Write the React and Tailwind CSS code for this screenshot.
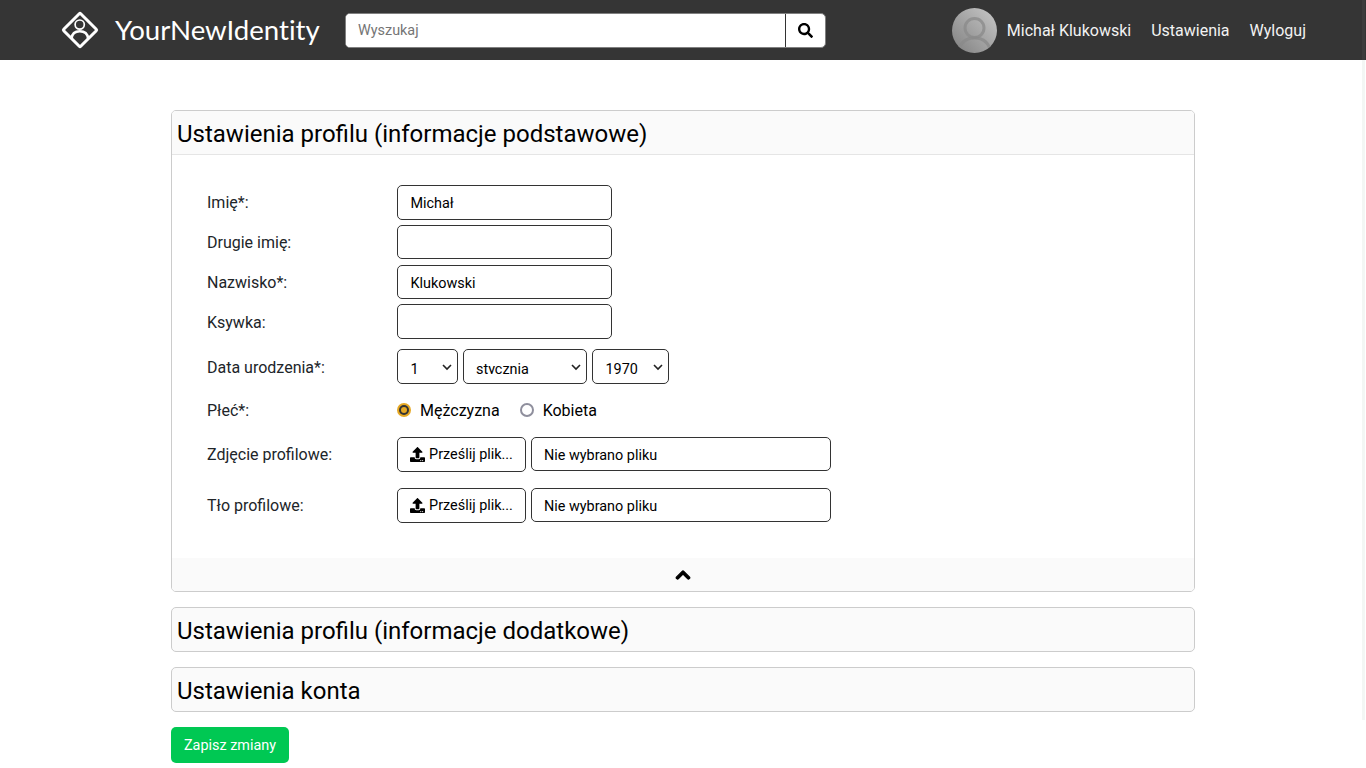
import React from "react";
import { FaSearch, FaUpload, FaChevronUp } from "react-icons/fa";

function Logo() {
  return (
    <svg width="40" height="40" viewBox="0 0 40 40" fill="none" stroke="#fff" className="shrink-0">
      <rect x="8" y="8" width="24" height="24" rx="1" transform="rotate(45 20 20)" strokeWidth="3" />
      <circle cx="19.7" cy="14.6" r="4.6" strokeWidth="1.7" />
      <path d="M11.5 28.5 C12 24 15 21.2 19.8 21.2 C24.6 21.2 27.6 24 28.2 28.5" strokeWidth="2.6" />
    </svg>
  );
}

function Avatar() {
  return (
    <svg width="45" height="45" viewBox="0 0 45 45" className="shrink-0">
      <defs>
        <linearGradient id="av" x1="0" y1="1" x2="1" y2="0">
          <stop offset="0" stopColor="#7f7f7f" />
          <stop offset="1" stopColor="#c9c9c9" />
        </linearGradient>
        <clipPath id="avc"><circle cx="22.5" cy="22.5" r="22.5" /></clipPath>
      </defs>
      <circle cx="22.5" cy="22.5" r="22.5" fill="url(#av)" />
      <g clipPath="url(#avc)" fill="none" stroke="#8a8a8a" strokeOpacity="0.75">
        <circle cx="22.5" cy="20" r="9.5" strokeWidth="3" />
        <path d="M6 45 C8 34 14 30 22.5 30 C31 30 37 34 39 45" strokeWidth="3" />
      </g>
    </svg>
  );
}

function Label({ children, className = "pt-[2px]" }) {
  return <div className={`w-[190px] shrink-0 text-base text-[#212529] ${className}`}>{children}</div>;
}

const inputCls = "w-[215px] h-[34.6px] rounded-[5px] border border-[#333] bg-white px-[12.5px] pt-[2.5px] text-[14.4px] text-black";
const selectCls = "h-[35px] w-full appearance-none rounded-[5px] border border-[#333] bg-white text-[14.4px] text-black";

function TextRow({ label, value }) {
  return (
    <div className="flex items-center">
      <Label>{label}</Label>
      <input className={inputCls} defaultValue={value} />
    </div>
  );
}

function FileRow({ label }) {
  return (
    <div className="flex items-center">
      <Label>{label}</Label>
      <button className="flex h-[35px] w-[129px] items-center justify-center gap-[4px] rounded-[5px] border border-[#333] bg-white text-[14.4px] text-black">
        <FaUpload className="text-[15px]" />
        <span>Prześlij plik...</span>
      </button>
      <div className="ml-[5px] flex h-[34px] w-[300px] items-center rounded-[5px] border border-[#333] bg-white px-[12px] pt-[2px] text-[14.4px] text-black">
        Nie wybrano pliku
      </div>
    </div>
  );
}

function CollapsedCard({ title }) {
  return (
    <div className="mt-[15px] flex h-[45px] items-center rounded-[5px] border border-[#ccc] bg-[#fafafa] px-[5px] pt-[4px] text-2xl text-black">
      {title}
    </div>
  );
}

function SelectBox({ width, value, padding }) {
  return (
    <div className={`relative ${width}`}>
      <select className={`${selectCls} ${padding}`} defaultValue={value}><option>{value}</option></select>
      <svg width="10" height="7" viewBox="0 0 10 7" fill="none" stroke="#222" strokeWidth="1.6" className="pointer-events-none absolute right-[6px] top-[15px]">
        <path d="M1 1l4 4 4-4" />
      </svg>
    </div>
  );
}

export default function App() {
  return (
    <div className="relative min-h-[768px] overflow-hidden bg-white font-['Roboto',sans-serif]">
      <header className="flex h-[60px] items-center bg-[#353535] pl-[60px] pr-[60px] text-white">
        <Logo />
        <div className="ml-[15px] w-[230px] font-['Lato',sans-serif] text-[27.6px] leading-none [font-variant-ligatures:none]">YourNewIdentity</div>
        <div className="flex h-[35px] w-[481px] overflow-hidden rounded-[5px] border border-[#808080] bg-white">
          <input placeholder="Wyszukaj" className="min-w-0 flex-1 bg-white px-[12px] pt-[2px] text-[14.4px] text-black placeholder:text-[#757575]" />
          <div className="flex w-[40px] items-center justify-center border-l border-[#333] text-black">
            <FaSearch className="text-[15px]" />
          </div>
        </div>
        <div className="ml-auto flex items-center text-base text-[#f2f2f2]">
          <Avatar />
          <span className="ml-[10px] pt-[2px]">Michał Klukowski</span>
          <span className="ml-[20px] pt-[2px]">Ustawienia</span>
          <span className="ml-[20px] pt-[2px]">Wyloguj</span>
        </div>
      </header>

      <main className="mx-auto mt-[50px] w-[1024px]">
        <section className="overflow-hidden rounded-[5px] border border-[#ccc] bg-white">
          <div className="flex h-[44px] items-center border-b border-[#e5e5e5] bg-[#fafafa] px-[5px] pt-[2px] text-2xl text-black">
            Ustawienia profilu (informacje podstawowe)
          </div>
          <div className="flex flex-col pl-[35px] pt-[30px]">
            <div className="flex flex-col gap-[5.2px]">
              <TextRow label="Imię*:" value="Michał" />
              <TextRow label="Drugie imię:" value="" />
              <TextRow label="Nazwisko*:" value="Klukowski" />
              <TextRow label="Ksywka:" value="" />
            </div>
            <div className="mt-[10px] flex items-center">
              <Label className="pt-[4px]">Data urodzenia*:</Label>
              <div className="flex gap-[5px]">
                <SelectBox width="w-[61px]" value="1" padding="pl-[12.5px] pt-[6px]" />
                <SelectBox width="w-[124px]" value="stycznia" padding="pl-[12px] pt-[9px] pb-[9px]" />
                <SelectBox width="w-[77px]" value="1970" padding="pl-[12.5px] pt-[6px]" />
              </div>
            </div>
            <div className="mt-[16px] flex h-[21px] items-center">
              <Label>Płeć*:</Label>
              <span className="flex h-[14px] w-[14px] items-center justify-center rounded-full bg-[#e6a823]">
                <span className="flex h-[10px] w-[10px] items-center justify-center rounded-full bg-[#333]">
                  <span className="h-[6px] w-[6px] rounded-full bg-[#e6a823]" />
                </span>
              </span>
              <span className="ml-[9px] pt-[2px] text-base text-black">Mężczyzna</span>
              <span className="ml-[20px] h-[14px] w-[14px] rounded-full border-2 border-[#8f8f9d] bg-white" />
              <span className="ml-[9px] pt-[2px] text-base text-black">Kobieta</span>
            </div>
            <div className="mt-[16px] flex flex-col gap-[16px]">
              <FileRow label="Zdjęcie profilowe:" />
              <FileRow label="Tło profilowe:" />
            </div>
          </div>
          <div className="mt-[35px] flex h-[33px] items-center justify-center bg-[#fafafa] pt-[2px] text-black">
            <FaChevronUp className="text-[16px]" stroke="currentColor" strokeWidth="40" />
          </div>
        </section>

        <CollapsedCard title="Ustawienia profilu (informacje dodatkowe)" />
        <CollapsedCard title="Ustawienia konta" />

        <button className="mt-[15px] h-[36px] w-[118px] rounded-[5px] bg-[#00c853] pt-[2px] text-[14.4px] text-white">Zapisz zmiany</button>
      </main>

      <div className="absolute right-[1px] top-0 h-[60px] w-[3px] bg-[#3d3d3d]" />
      <div className="absolute right-[1px] top-[60px] h-[660px] w-[3px] bg-[#f3f6f4]" />
    </div>
  );
}
